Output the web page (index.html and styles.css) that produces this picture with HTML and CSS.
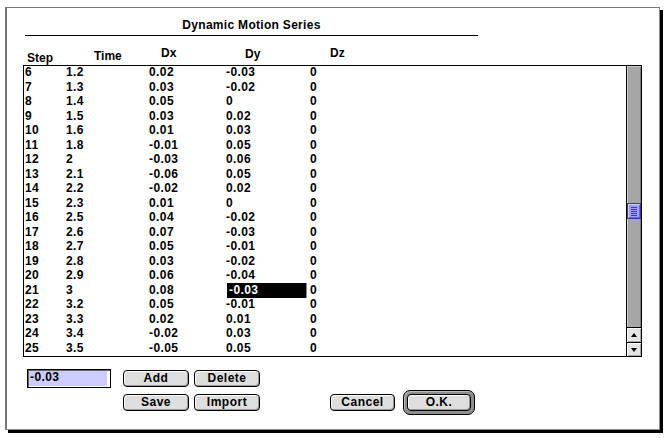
FILE: index.html
```html
<!DOCTYPE html>
<html>
<head>
<meta charset="utf-8">
<link rel="stylesheet" href="styles.css">
</head>
<body>
<div class="window">
  <div class="title">Dynamic Motion Series</div>
  <div class="headers">
    <span class="h-step">Step</span>
    <span class="h-time">Time</span>
    <span class="h-dx">Dx</span>
    <span class="h-dy">Dy</span>
    <span class="h-dz">Dz</span>
  </div>
  <div class="list">
    <div class="rows">
      <span>6</span><span>1.2</span><span>0.02</span><span>-0.03</span><span>0</span>
      <span>7</span><span>1.3</span><span>0.03</span><span>-0.02</span><span>0</span>
      <span>8</span><span>1.4</span><span>0.05</span><span>0</span><span>0</span>
      <span>9</span><span>1.5</span><span>0.03</span><span>0.02</span><span>0</span>
      <span>10</span><span>1.6</span><span>0.01</span><span>0.03</span><span>0</span>
      <span>11</span><span>1.8</span><span>-0.01</span><span>0.05</span><span>0</span>
      <span>12</span><span>2</span><span>-0.03</span><span>0.06</span><span>0</span>
      <span>13</span><span>2.1</span><span>-0.06</span><span>0.05</span><span>0</span>
      <span>14</span><span>2.2</span><span>-0.02</span><span>0.02</span><span>0</span>
      <span>15</span><span>2.3</span><span>0.01</span><span>0</span><span>0</span>
      <span>16</span><span>2.5</span><span>0.04</span><span>-0.02</span><span>0</span>
      <span>17</span><span>2.6</span><span>0.07</span><span>-0.03</span><span>0</span>
      <span>18</span><span>2.7</span><span>0.05</span><span>-0.01</span><span>0</span>
      <span>19</span><span>2.8</span><span>0.03</span><span>-0.02</span><span>0</span>
      <span>20</span><span>2.9</span><span>0.06</span><span>-0.04</span><span>0</span>
      <span>21</span><span>3</span><span>0.08</span><span class="sel">-0.03</span><span>0</span>
      <span>22</span><span>3.2</span><span>0.05</span><span>-0.01</span><span>0</span>
      <span>23</span><span>3.3</span><span>0.02</span><span>0.01</span><span>0</span>
      <span>24</span><span>3.4</span><span>-0.02</span><span>0.03</span><span>0</span>
      <span>25</span><span>3.5</span><span>-0.05</span><span>0.05</span><span>0</span>
    </div>
    <div class="scrollbar">
      <div class="track track-a"></div>
      <div class="thumb"><div class="grip"></div></div>
      <div class="track track-b"></div>
      <div class="arrow up"><i></i></div>
      <div class="arrow down"><i></i></div>
    </div>
  </div>
  <div class="row1">
    <div class="field"><span>-0.03</span></div>
    <div class="btn add">Add</div>
    <div class="btn del">Delete</div>
  </div>
  <div class="row2">
    <div class="btn">Save</div>
    <div class="btn import">Import</div>
    <div class="btn cancel">Cancel</div>
    <div class="ring"><div class="btn ok">O.K.</div></div>
  </div>
</div>
</body>
</html>
```
FILE: styles.css
```css
* { box-sizing: border-box; }
html, body { margin: 0; }
body {
  width: 668px;
  height: 438px;
  padding: 7px 0 0 5px;
  background: #fff;
  font-family: "Liberation Sans", Arial, sans-serif;
  font-weight: bold;
  font-size: 12px;
  color: #000;
  overflow: hidden;
}
.window {
  width: 655px;
  height: 423px;
  border-left: 2px solid #777;
  border-top: 1px solid #777;
  border-right: 1px solid #8a8a8a;
  border-bottom: 1px solid #8a8a8a;
  box-shadow: 3px 3px 0 #000;
  background: #fff;
}
.title {
  margin: 11px 0 0 18px;
  width: 453px;
  line-height: 12px;
  padding-bottom: 4px;
  border-bottom: 1px solid #000;
  text-align: center;
  letter-spacing: 0.3px;
}
.headers {
  display: flex;
  align-items: flex-start;
  height: 29px;
  padding-left: 20px;
  line-height: 12px;
}
.h-step { width: 67px; margin-top: 16px; }
.h-time { width: 67px; margin-top: 14px; }
.h-dx { width: 84px; margin-top: 11px; }
.h-dy { width: 85px; margin-top: 12px; }
.h-dz { margin-top: 11px; }

.list {
  margin-left: 16px;
  width: 619px;
  height: 292px;
  border: 1px solid #000;
  display: flex;
}
.rows {
  flex: 1;
  display: grid;
  grid-template-columns: 41px 83px 77px 84px 1fr;
  grid-auto-rows: 14.5px;
  align-content: start;
  line-height: 10px;
  padding: 1px 0 0 1px;
  letter-spacing: 0.4px;
}
.sel {
  background: #000;
  color: #fff;
  margin: -2px 0 0 1px;
  width: 80px;
  height: 15px;
  padding: 2px 0 0 2px;
  border-right: 1px solid #888;
}
.scrollbar {
  width: 15px;
  border-left: 1px solid #000;
  display: flex;
  flex-direction: column;
}
.track {
  background: #a6a6a6;
  box-shadow: inset 1px 0 0 #cfcfcf, inset -1px 0 0 #7c7c7c;
}
.track-a { height: 137px; box-shadow: inset 1px 1px 0 #cfcfcf, inset -1px 0 0 #7c7c7c; }
.track-b { flex: 1; }
.thumb {
  height: 16px;
  border: 1px solid #3a3a9a;
  background: #9f9fff;
  box-shadow: inset 1px 1px 0 #ccccff, inset -1px -1px 0 #6a6ad0;
  display: flex;
  align-items: center;
  justify-content: center;
}
.grip {
  width: 6px;
  height: 9px;
  background: repeating-linear-gradient(to bottom, #3a3aa0 0 1px, transparent 1px 2px);
}
.arrow {
  height: 15px;
  border-top: 1px solid #000;
  background: #e4e4e4;
  box-shadow: inset 1px 1px 0 #fff, inset -1px -1px 0 #aaa;
  display: flex;
  align-items: center;
  justify-content: center;
}
.arrow.down { height: 14px; }
.arrow i { width: 0; height: 0; border-left: 3.5px solid transparent; border-right: 3.5px solid transparent; }
.up i { border-bottom: 4px solid #000; }
.down i { border-top: 4px solid #000; }

.row1 {
  display: flex;
  align-items: flex-start;
  height: 19px;
  margin-top: 12px;
  padding-left: 20px;
}
.field {
  width: 84px;
  height: 19px;
  border: 1px solid #000;
  padding: 1px 3px 1px 1px;
  box-shadow: inset 1px 1px 0 #666;
}
.field span {
  display: block;
  height: 100%;
  background: #ccccff;
  line-height: 13px;
  padding-left: 1px;
  letter-spacing: 0.4px;
}
.btn {
  width: 66px;
  height: 17px;
  border: 1px solid #000;
  border-radius: 4px;
  background: #dedede;
  box-shadow: inset 1px 1px 0 #fff, inset -1px -1px 0 #9a9a9a;
  display: flex;
  align-items: center;
  justify-content: center;
  padding-bottom: 2px;
  letter-spacing: 0.5px;
}
.add { margin: 1px 0 0 12px; }
.del { margin: 1px 0 0 5px; }
.row2 {
  display: flex;
  align-items: center;
  height: 25px;
  margin-top: 2px;
  padding-left: 116px;
}
.import { margin-left: 5px; }
.cancel { margin-left: 70px; width: 65px; }
.ring {
  margin-left: 8px;
  width: 72px;
  height: 25px;
  border: 1px solid #000;
  border-radius: 7px;
  background: #8e8e8e;
  box-shadow: inset 1px 1px 0 #bbb;
  padding: 3px;
}
.ok { width: 64px; }
```
